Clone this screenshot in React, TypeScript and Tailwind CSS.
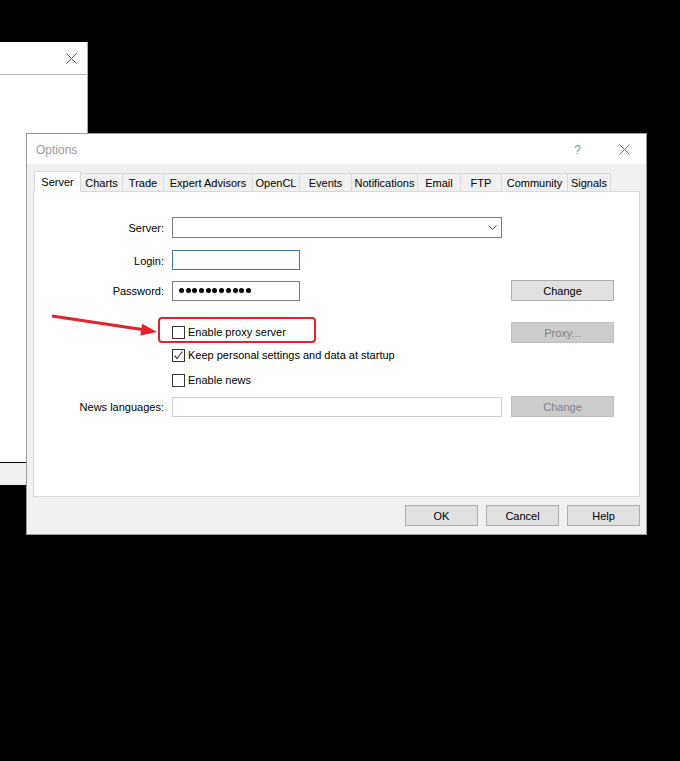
import React from "react";

const tabs = [
  { label: "Server", w: "w-[47px]" },
  { label: "Charts", w: "w-[42px]" },
  { label: "Trade", w: "w-[41px]" },
  { label: "Expert Advisors", w: "w-[89px]" },
  { label: "OpenCL", w: "w-[47px]" },
  { label: "Events", w: "w-[52px]" },
  { label: "Notifications", w: "w-[66px]" },
  { label: "Email", w: "w-[43px]" },
  { label: "FTP", w: "w-[41px]" },
  { label: "Community", w: "w-[66px]" },
  { label: "Signals", w: "w-[43px]" },
];

function CloseGlyph({ color = "#6b6b6b" }: { color?: string }) {
  return (
    <svg width="11" height="11" viewBox="0 0 11 11">
      <path d="M0.5 0.5 L10.5 10.5 M10.5 0.5 L0.5 10.5" stroke={color} strokeWidth="1" fill="none" />
    </svg>
  );
}

function Checkbox({ checked }: { checked?: boolean }) {
  return (
    <span className="w-[13px] h-[13px] border border-[#333333] bg-white flex items-center justify-center shrink-0">
      {checked && (
        <svg width="11" height="11" viewBox="0 0 11 11">
          <path d="M1.5 5.5 L4 8.5 L9.5 1.5" stroke="#444" strokeWidth="1.2" fill="none" />
        </svg>
      )}
    </span>
  );
}

function Button({ label, disabled, w = "w-[103px]" }: { label: string; disabled?: boolean; w?: string }) {
  return (
    <div
      className={`${w} h-[21px] border flex items-center justify-center pt-[2px] text-[11px] ${
        disabled ? "bg-[#cccccc] border-[#bfbfbf] text-[#838383]" : "bg-[#e1e1e1] border-[#adadad] text-black"
      }`}
    >
      {label}
    </div>
  );
}

export default function App() {
  return (
    <div
      className="relative w-[680px] h-[761px] bg-black overflow-hidden"
      style={{ fontFamily: '"Liberation Sans", Arial, sans-serif' }}
    >
      {/* window behind */}
      <div className="absolute left-0 top-[42px] w-[88px] h-[443px] bg-white border-r border-[#a9a9a9] flex flex-col">
        <div className="h-[33px] border-b border-[#b4b4b4] flex items-center justify-end pr-[10px]">
          <CloseGlyph color="#555" />
        </div>
        <div className="flex-1" />
        <div className="h-[23px] border-t border-black bg-[#f0f0f0]" />
      </div>

      {/* Options dialog */}
      <div className="absolute left-[26px] top-[133px] w-[621px] h-[402px] border border-[#9a9a9a] bg-[#f0f0f0] flex flex-col">
        <div className="h-[30px] bg-white flex items-center pl-[9px] pr-[16px]">
          <span className="text-[12px] text-[#9a9a9a] pt-[2px]">Options</span>
          <span className="ml-auto text-[12px] text-[#8a8a8a] mr-[38px] pt-[2px]">?</span>
          <CloseGlyph />
        </div>

        <div className="px-[6px] pt-[7px] flex flex-col">
          {/* tabs */}
          <div className="h-[20px] flex items-end pl-[1px]">
            {tabs.map((t, i) =>
              i === 0 ? (
                <div
                  key={t.label}
                  className={`${t.w} h-[21px] translate-y-[1px] relative z-10 bg-white border-t border-l border-r border-[#d9d9d9] flex items-center justify-center text-[11px] text-black pt-[1px]`}
                >
                  {t.label}
                </div>
              ) : (
                <div
                  key={t.label}
                  className={`${t.w} h-[18px] bg-[#f0f0f0] border-t border-r border-[#d9d9d9] flex items-center justify-center text-[11px] text-black pt-[2px]`}
                >
                  {t.label}
                </div>
              )
            )}
          </div>

          {/* panel */}
          <div className="h-[306px] bg-white border border-[#d9d9d9] pt-[25px] flex flex-col text-[11px] text-black">
            <div className="h-[21px] flex items-center">
              <span className="w-[130px] text-right pt-[2px]">Server:</span>
              <div className="ml-[8px] w-[330px] h-[21px] border border-[#7a7a7a] bg-white flex items-center justify-end pr-[4px]">
                <svg width="9" height="5" viewBox="0 0 9 5">
                  <path d="M0.5 0.5 L4.5 4.5 L8.5 0.5" stroke="#444" strokeWidth="1" fill="none" />
                </svg>
              </div>
            </div>

            <div className="mt-[12px] h-[20px] flex items-center">
              <span className="w-[130px] text-right pt-[2px]">Login:</span>
              <div className="ml-[8px] w-[128px] h-[20px] border border-[#3e7bb6] bg-white" />
            </div>

            <div className="mt-[10px] h-[21px] flex items-center">
              <span className="w-[130px] text-right pt-[2px]">Password:</span>
              <div className="ml-[8px] w-[128px] h-[20px] border border-[#7a7a7a] bg-white flex items-center pl-[6px] gap-[1.7px]">
                {Array.from({ length: 11 }).map((_, i) => (
                  <span key={i} className="w-[5px] h-[5px] rounded-full bg-black" />
                ))}
              </div>
              <div className="ml-[211px]">
                <Button label="Change" />
              </div>
            </div>

            <div className="mt-[21px] h-[21px] flex items-center">
              <div className="w-[138px]" />
              <Checkbox />
              <span className="ml-[3px]">Enable proxy server</span>
              <div className="ml-auto mr-[25px]">
                <Button label="Proxy..." disabled />
              </div>
            </div>

            <div className="mt-[6px] h-[13px] flex items-center">
              <div className="w-[138px]" />
              <Checkbox checked />
              <span className="ml-[3px]">Keep personal settings and data at startup</span>
            </div>

            <div className="mt-[12px] h-[13px] flex items-center">
              <div className="w-[138px]" />
              <Checkbox />
              <span className="ml-[3px]">Enable news</span>
            </div>

            <div className="mt-[9px] h-[21px] flex items-center">
              <span className="w-[130px] text-right pt-[2px]">News languages:</span>
              <div className="ml-[8px] w-[330px] h-[20px] border border-[#d0d0d0] bg-white" />
              <div className="ml-[9px]">
                <Button label="Change" disabled />
              </div>
            </div>
          </div>

          {/* bottom buttons */}
          <div className="mt-[8px] flex justify-end gap-[8px]">
            <Button label="OK" w="w-[73px]" />
            <Button label="Cancel" w="w-[73px]" />
            <Button label="Help" w="w-[73px]" />
          </div>
        </div>
      </div>

      {/* annotation */}
      <div className="absolute left-[158px] top-[317px] w-[158px] h-[26px] border-2 border-[#e2232a] rounded-[4px]" />
      <svg className="absolute left-[48px] top-[308px]" width="114" height="30" viewBox="0 0 114 30">
        <path d="M4 8 L94 21.6" stroke="#e2232a" strokeWidth="3" fill="none" />
        <path d="M109 24 L94.1 15.7 L92.3 27.5 Z" fill="#e2232a" />
      </svg>
    </div>
  );
}
